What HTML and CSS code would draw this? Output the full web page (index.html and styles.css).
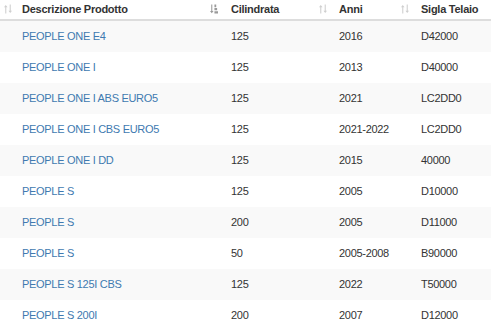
FILE: index.html
```html
<!DOCTYPE html>
<html lang="it">
<head>
<meta charset="utf-8">
<title>Prodotti</title>
<link rel="stylesheet" href="styles.css">
</head>
<body>
<table class="grid">
  <colgroup>
    <col class="c0"><col class="c1"><col class="c2"><col class="c3"><col class="c4">
  </colgroup>
  <thead>
    <tr>
      <th><div class="th-in"><span></span><svg class="ico" viewBox="0 0 9 10"><path d="M2 0.5 L0 3 H1.4 V10 H2.6 V3 H4 Z M7 9.5 L5 7 H6.4 V0 H7.6 V7 H9 Z"/></svg></div></th>
      <th><div class="th-in"><span>Descrizione Prodotto</span><svg class="ico on" viewBox="0 0 9 10"><path d="M2 9.8 L0 7.2 H1.4 V0 H2.6 V7.2 H4 Z M5 0 H7 V3 H5 Z M5 4 H8 V6.5 H5 Z M5 7.5 H9 V10 H5 Z"/></svg></div></th>
      <th><div class="th-in"><span>Cilindrata</span><svg class="ico" viewBox="0 0 9 10"><path d="M2 0.5 L0 3 H1.4 V10 H2.6 V3 H4 Z M7 9.5 L5 7 H6.4 V0 H7.6 V7 H9 Z"/></svg></div></th>
      <th><div class="th-in"><span>Anni</span><svg class="ico" viewBox="0 0 9 10"><path d="M2 0.5 L0 3 H1.4 V10 H2.6 V3 H4 Z M7 9.5 L5 7 H6.4 V0 H7.6 V7 H9 Z"/></svg></div></th>
      <th><div class="th-in"><span>Sigla Telaio</span></div></th>
    </tr>
  </thead>
  <tbody>
    <tr><td></td><td><a href="#">PEOPLE ONE E4</a></td><td>125</td><td>2016</td><td>D42000</td></tr>
    <tr><td></td><td><a href="#">PEOPLE ONE I</a></td><td>125</td><td>2013</td><td>D40000</td></tr>
    <tr><td></td><td><a href="#">PEOPLE ONE I ABS EURO5</a></td><td>125</td><td>2021</td><td>LC2DD0</td></tr>
    <tr><td></td><td><a href="#">PEOPLE ONE I CBS EURO5</a></td><td>125</td><td>2021-2022</td><td>LC2DD0</td></tr>
    <tr><td></td><td><a href="#">PEOPLE ONE I DD</a></td><td>125</td><td>2015</td><td>40000</td></tr>
    <tr><td></td><td><a href="#">PEOPLE S</a></td><td>125</td><td>2005</td><td>D10000</td></tr>
    <tr><td></td><td><a href="#">PEOPLE S</a></td><td>200</td><td>2005</td><td>D11000</td></tr>
    <tr><td></td><td><a href="#">PEOPLE S</a></td><td>50</td><td>2005-2008</td><td>B90000</td></tr>
    <tr><td></td><td><a href="#">PEOPLE S 125I CBS</a></td><td>125</td><td>2022</td><td>T50000</td></tr>
    <tr><td></td><td><a href="#">PEOPLE S 200I</a></td><td>200</td><td>2007</td><td>D12000</td></tr>
  </tbody>
</table>
</body>
</html>
```
FILE: styles.css
```css
html, body {
  margin: 0;
  padding: 0;
  background: #fff;
  overflow: hidden;
}
.grid {
  border-collapse: collapse;
  table-layout: fixed;
  width: 491px;
  font-family: "Liberation Sans", Arial, sans-serif;
  font-size: 11px;
  color: #333;
}
.c0 { width: 14px; }
.c1 { width: 209px; }
.c2 { width: 108px; }
.c3 { width: 82px; }
.c4 { width: 78px; }
.grid th {
  height: 19px;
  padding: 0 0 0 8px;
  border-bottom: 2px solid #ddd;
  font-weight: bold;
  letter-spacing: -0.25px;
  text-align: left;
  line-height: 16px;
  vertical-align: middle;
  white-space: nowrap;
}
.grid th:first-child { padding-left: 0; }
.th-in {
  display: flex;
  justify-content: space-between;
  align-items: center;
  padding-bottom: 1px;
}
.ico {
  width: 8px;
  height: 10px;
  margin-right: 4px;
  fill: #cfcfcf;
  flex: none;
}
.ico.on { fill: #9a9a9a; margin-right: 5px; }
.grid th:first-child .ico { margin-right: 2px; }
.grid td {
  height: 31px;
  padding: 0 0 0 8px;
  line-height: 15px;
  letter-spacing: -0.3px;
  vertical-align: middle;
  white-space: nowrap;
}
.grid td:first-child { padding: 0; }
.grid tbody tr:nth-child(odd) td { background: #f9f9f9; }
.grid a {
  color: #4079b0;
  text-decoration: none;
}
```
